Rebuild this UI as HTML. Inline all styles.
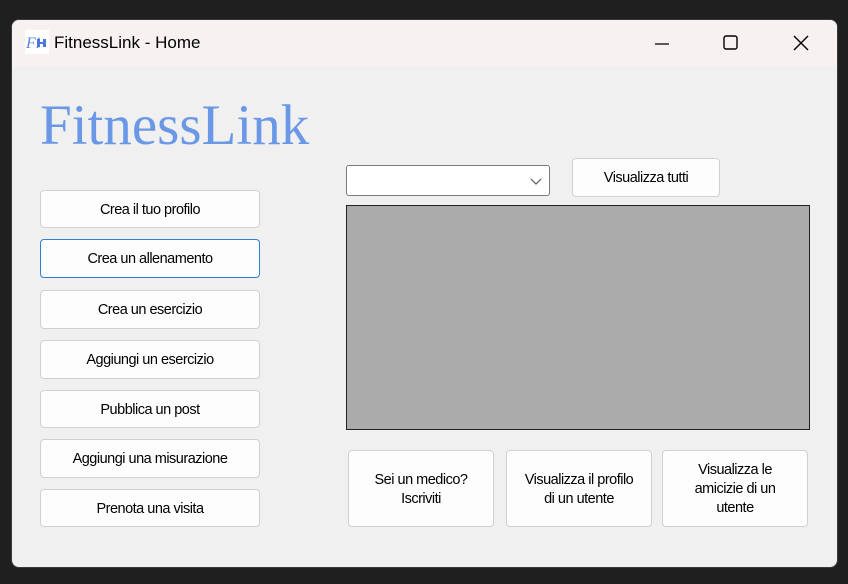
<!DOCTYPE html>
<html><head><meta charset="utf-8"><style>
*{margin:0;padding:0;box-sizing:border-box}
body{width:848px;height:584px;background:#1f1f1f;position:relative;overflow:hidden;font-family:"Liberation Sans",sans-serif}
.win{position:absolute;left:11px;top:19px;width:827px;height:549px;background:#f0f0f0;border-radius:8px;overflow:hidden;border:1px solid #3a3a3a}
.tb{position:absolute;left:0;top:0;width:100%;height:46px;background:#f7f1f2}
.tb .t{position:absolute;left:42px;top:13px;font-size:17px;color:#000}
.ic{position:absolute;left:13px;top:10px;width:24px;height:24px;background:#fff}
.b{position:absolute;background:#fdfdfd;border:1px solid #d0d0d0;border-radius:4px;font-size:14.5px;color:#000;display:flex;align-items:center;justify-content:center;text-align:center;line-height:19px;letter-spacing:-0.5px;padding-top:2px}
.logo{position:absolute;left:28px;top:73px;font-family:"Liberation Serif",serif;font-size:57px;color:#6b98e6;letter-spacing:0px}
</style></head><body>
<div class="win">
<div class="tb">
<div class="ic"><svg width="24" height="24"><text x="1" y="18" font-family="Liberation Serif" font-style="italic" font-size="16" fill="#5c86d6">Fi</text><rect x="12" y="9" width="3" height="8" fill="#4a78d8"/><rect x="15" y="12" width="3" height="2" fill="#4a78d8"/><rect x="18" y="9" width="3" height="8" fill="#4a78d8"/></svg></div>
<div class="t">FitnessLink - Home</div>
<svg style="position:absolute;left:640px;top:14px" width="20" height="20"><line x1="3" y1="10" x2="17" y2="10" stroke="#000" stroke-width="1.3"/></svg>
<svg style="position:absolute;left:709px;top:13px" width="20" height="20"><rect x="3" y="3" width="13" height="13" rx="2" fill="none" stroke="#000" stroke-width="1.4"/></svg>
<svg style="position:absolute;left:779px;top:13px" width="20" height="20"><path d="M3 3L17 17M17 3L3 17" stroke="#000" stroke-width="1.4"/></svg>
</div>
<div class="logo">FitnessLink</div>
<div class="b" style="left:28px;top:170px;width:220px;height:38px">Crea il tuo profilo</div>
<div class="b" style="left:28px;top:219px;width:220px;height:39px;border:1.5px solid #2d7fd4">Crea un allenamento</div>
<div class="b" style="left:28px;top:270px;width:220px;height:39px">Crea un esercizio</div>
<div class="b" style="left:28px;top:320px;width:220px;height:39px">Aggiungi un esercizio</div>
<div class="b" style="left:28px;top:370px;width:220px;height:38px">Pubblica un post</div>
<div class="b" style="left:28px;top:419px;width:220px;height:39px">Aggiungi una misurazione</div>
<div class="b" style="left:28px;top:469px;width:220px;height:38px">Prenota una visita</div>
<div style="position:absolute;left:334px;top:145px;width:204px;height:31px;background:#fff;border:1px solid #7a7a7a;border-radius:3px">
<svg style="position:absolute;right:6px;top:10px" width="14" height="10"><path d="M2 3L7 8L12 3" fill="none" stroke="#555" stroke-width="1.2"/></svg></div>
<div class="b" style="left:560px;top:138px;width:148px;height:39px">Visualizza tutti</div>
<div style="position:absolute;left:334px;top:185px;width:464px;height:225px;background:#ababab;border:1.5px solid #222"></div>
<div class="b" style="left:336px;top:430px;width:146px;height:77px">Sei un medico?<br>Iscriviti</div>
<div class="b" style="left:494px;top:430px;width:146px;height:77px">Visualizza il profilo<br>di un utente</div>
<div class="b" style="left:650px;top:430px;width:146px;height:77px">Visualizza le<br>amicizie di un<br>utente</div>
</div>
</body></html>
